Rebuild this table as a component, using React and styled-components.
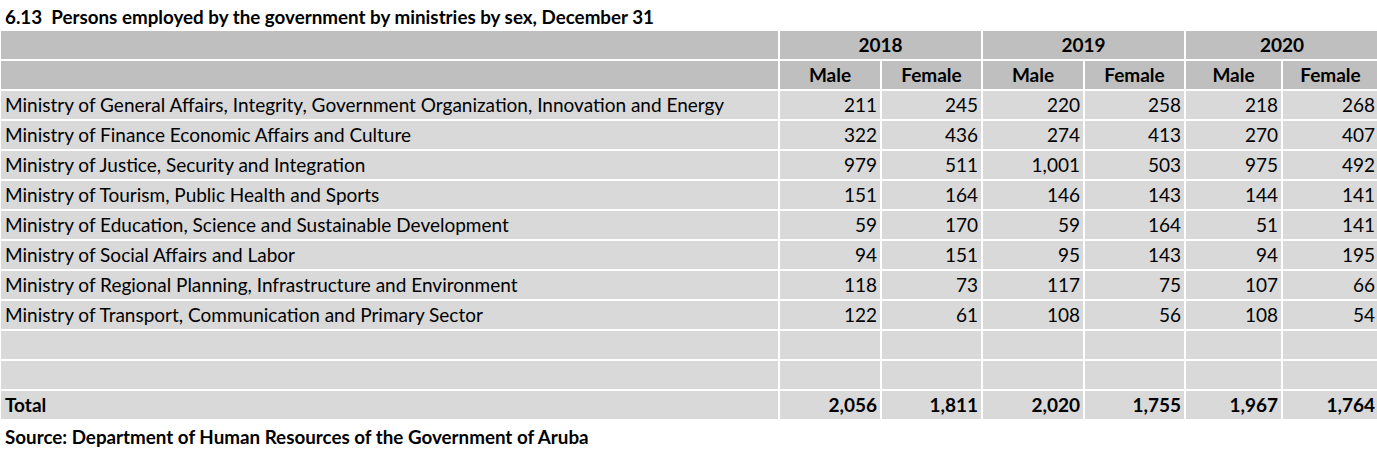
import React from 'react';
import styled, { createGlobalStyle } from 'styled-components';

const GlobalStyle = createGlobalStyle`
  html, body {
    margin: 0;
    padding: 0;
    background: #ffffff;
  }
  body {
    font-family: Lato, "Noto Sans", sans-serif;
    color: #000000;
  }
`;

const Page = styled.div`
  width: 1377px;
  overflow: hidden;
`;

const Title = styled.div`
  height: 31px;
  padding-left: 5px;
  font-size: 18.8px;
  font-weight: 700;
  line-height: 33px;
  white-space: pre;
`;

const Table = styled.table`
  border-collapse: separate;
  border-spacing: 2px;
  table-layout: fixed;
  margin: -2px 0 0 -1px;
  width: 1381px;
`;

const HeadCell = styled.th`
  box-sizing: border-box;
  height: 28px;
  padding: 0 4px 2px;
  background: #bfbfbf;
  font-size: 19px;
  font-weight: 700;
  text-align: center;
`;

const Cell = styled.td`
  box-sizing: border-box;
  height: 28px;
  padding: ${(p) => (p.$num ? '0 3px 2px 4px' : '0 4px 2px')};
  background: #d9d9d9;
  font-size: 19px;
  font-weight: ${(p) => (p.$bold ? 700 : 400)};
  text-align: ${(p) => (p.$num ? 'right' : 'left')};
  white-space: nowrap;
`;

const Source = styled.div`
  padding: 4px 0 0 5px;
  font-size: 18.8px;
  font-weight: 700;
`;

const years = ['2018', '2019', '2020'];

const rows = [
  ['Ministry of General Affairs, Integrity, Government Organization, Innovation and Energy', '211', '245', '220', '258', '218', '268'],
  ['Ministry of Finance Economic Affairs and Culture', '322', '436', '274', '413', '270', '407'],
  ['Ministry of Justice, Security and Integration', '979', '511', '1,001', '503', '975', '492'],
  ['Ministry of Tourism, Public Health and Sports', '151', '164', '146', '143', '144', '141'],
  ['Ministry of Education, Science and Sustainable Development', '59', '170', '59', '164', '51', '141'],
  ['Ministry of Social Affairs and Labor', '94', '151', '95', '143', '94', '195'],
  ['Ministry of Regional Planning, Infrastructure and Environment', '118', '73', '117', '75', '107', '66'],
  ['Ministry of Transport, Communication and Primary Sector', '122', '61', '108', '56', '108', '54'],
  ['', '', '', '', '', '', ''],
  ['', '', '', '', '', '', ''],
];

const total = ['Total', '2,056', '1,811', '2,020', '1,755', '1,967', '1,764'];

const colWidths = [777, 100, 99, 100, 99, 95, 95];

export default function App() {
  return (
    <Page>
      <GlobalStyle />
      <Title>{'6.13  Persons employed by the government by ministries by sex, December 31'}</Title>
      <Table>
        <colgroup>
          {colWidths.map((w, i) => (
            <col key={i} style={{ width: w }} />
          ))}
        </colgroup>
        <thead>
          <tr>
            <HeadCell />
            {years.map((y) => (
              <HeadCell key={y} colSpan={2}>{y}</HeadCell>
            ))}
          </tr>
          <tr>
            <HeadCell />
            {years.map((y) => (
              <React.Fragment key={y}>
                <HeadCell>Male</HeadCell>
                <HeadCell>Female</HeadCell>
              </React.Fragment>
            ))}
          </tr>
        </thead>
        <tbody>
          {rows.map((r, i) => (
            <tr key={i}>
              {r.map((v, j) => (
                <Cell key={j} $num={j > 0}>{v}</Cell>
              ))}
            </tr>
          ))}
          <tr>
            {total.map((v, j) => (
              <Cell key={j} $num={j > 0} $bold>{v}</Cell>
            ))}
          </tr>
        </tbody>
      </Table>
      <Source>Source: Department of Human Resources of the Government of Aruba</Source>
    </Page>
  );
}
